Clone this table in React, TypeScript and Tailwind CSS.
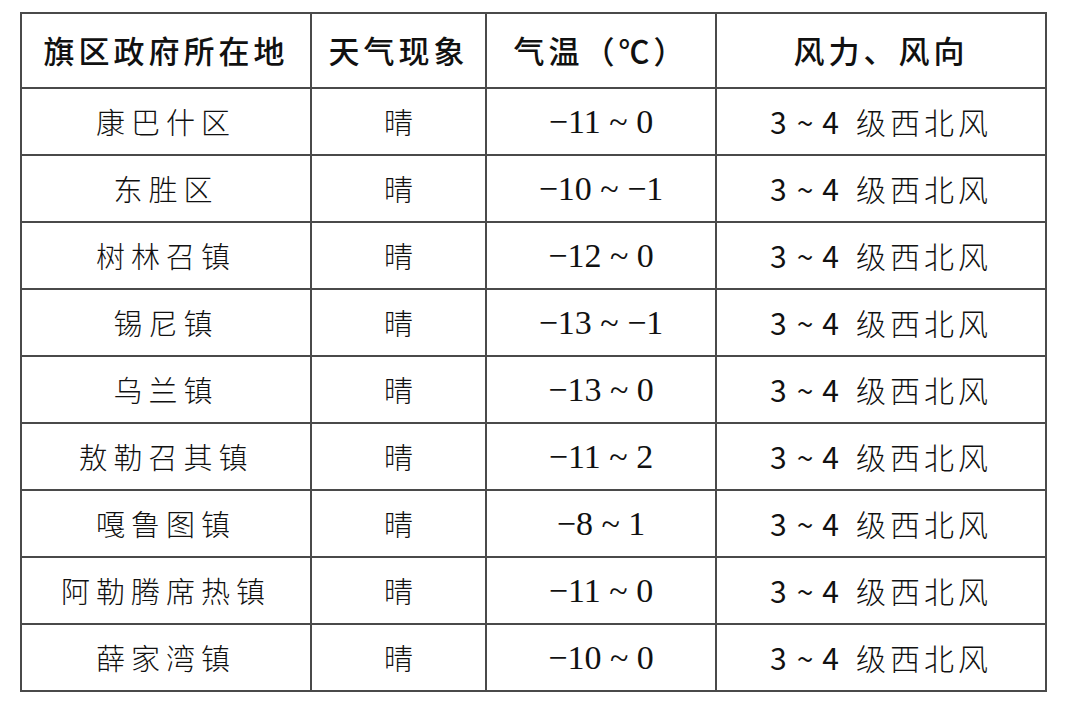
import React from 'react';

const rows: [string, string][] = [
  ['康巴什区', '−11 ~ 0'],
  ['东胜区', '−10 ~ −1'],
  ['树林召镇', '−12 ~ 0'],
  ['锡尼镇', '−13 ~ −1'],
  ['乌兰镇', '−13 ~ 0'],
  ['敖勒召其镇', '−11 ~ 2'],
  ['嘎鲁图镇', '−8 ~ 1'],
  ['阿勒腾席热镇', '−11 ~ 0'],
  ['薛家湾镇', '−10 ~ 0'],
];

const cjk = "font-['Noto_Sans_CJK_SC',sans-serif]";
const num = "font-['Liberation_Serif','Noto_Sans_CJK_SC',serif]";
const narrow = "font-['Liberation_Sans_Narrow','Noto_Sans_CJK_SC',sans-serif]";
const cell = 'border-2 border-[#4a4a4a]';

export default function App() {
  return (
    <div className="w-[1080px] h-[706px] bg-white pt-[12px] pl-[20px]">
      <table className="w-[1025px] border-collapse border-2 border-[#4a4a4a] text-[#111] table-fixed">
        <colgroup>
          <col className="w-[290px]" />
          <col className="w-[175px]" />
          <col className="w-[230px]" />
          <col className="w-[330px]" />
        </colgroup>
        <thead>
          <tr className="h-[75px]">
            <th className={`${cell} text-[31px] font-medium tracking-[4px] ${cjk}`}>旗区政府所在地</th>
            <th className={`${cell} text-[31px] font-medium tracking-[4px] ${cjk}`}>天气现象</th>
            <th className={`${cell} text-[31px] font-medium tracking-[4px] ${cjk}`}>气温（℃）</th>
            <th className={`${cell} text-[31px] font-medium tracking-[4px] ${cjk}`}>风力、风向</th>
          </tr>
        </thead>
        <tbody>
          {rows.map(([place, temp]) => (
            <tr key={place} className="h-[67px]">
              <td className={`${cell} text-center text-[29px] font-light tracking-[6px] ${cjk}`}>{place}</td>
              <td className={`${cell} text-center text-[29px] font-light ${cjk}`}>晴</td>
              <td className={`${cell} text-center text-[34px] leading-none ${num}`}>{temp}</td>
              <td className={`${cell} text-center text-[30px] font-light whitespace-nowrap`}>
                <span className={`${narrow} font-normal`}>3</span>
                <span className={`${narrow} font-normal ml-[10px]`}>~</span>
                <span className={`${narrow} font-normal ml-[9px]`}>4</span>
                <span className={`${cjk} tracking-[4px] ml-[17px]`}>级西北风</span>
              </td>
            </tr>
          ))}
        </tbody>
      </table>
    </div>
  );
}
